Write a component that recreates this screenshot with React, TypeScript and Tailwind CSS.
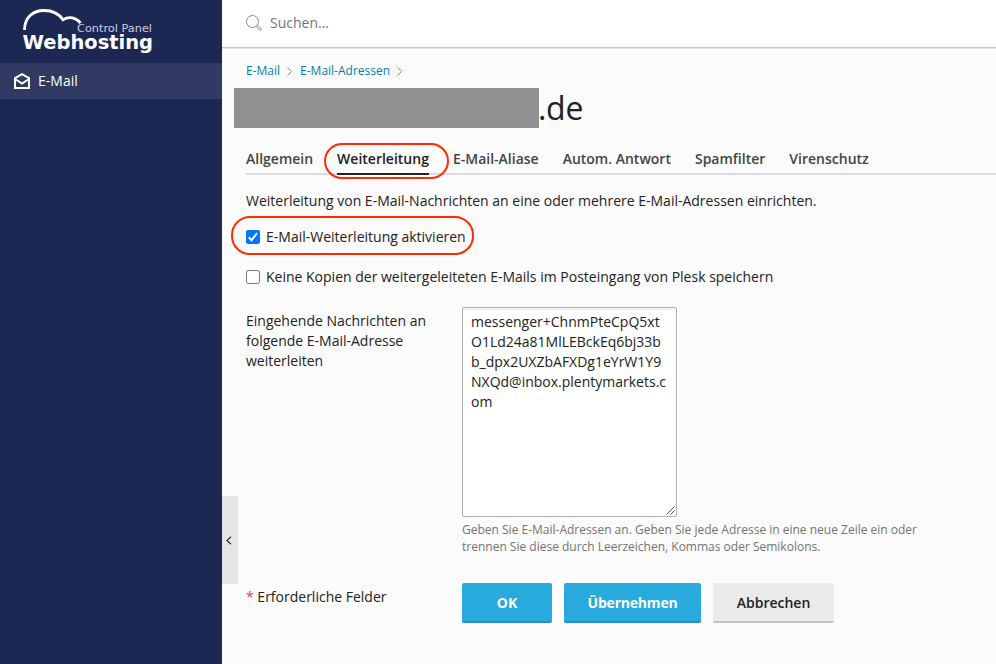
import React from 'react';

const tabs = ['Allgemein', 'Weiterleitung', 'E-Mail-Aliase', 'Autom. Antwort', 'Spamfilter', 'Virenschutz'];

function Logo() {
  return (
    <svg className="block h-[63px] w-[222px]" viewBox="0 0 222 63" fill="none">
      <path
        d="M24.500 30 C24.500 17.500 33 10.500 44 10.500 C53 10.500 59.500 14.500 63 19.800 C69 16 76 17.500 80.500 23"
        stroke="#fff"
        strokeWidth="2.800"
      />
      <text x="77" y="32" fill="#c9cde0" fontSize="10.500" textLength="75" lengthAdjust="spacingAndGlyphs" className="font-['DejaVu_Sans',sans-serif]">
        Control Panel
      </text>
      <text
        x="22.500"
        y="48.500"
        fill="#fff"
        fontSize="20"
        fontWeight="700"
        textLength="130.500"
        lengthAdjust="spacingAndGlyphs"
        className="font-['DejaVu_Sans',sans-serif]"
      >
        Webhosting
      </text>
    </svg>
  );
}

function Sidebar() {
  return (
    <aside className="h-full w-[222px] shrink-0 bg-[#1d2754]">
      <Logo />
      <div className="flex h-9 items-center bg-[#313a62] pl-[14px] text-white">
        <svg className="h-4 w-4" viewBox="0 0 16 16" fill="none" stroke="#fff" strokeWidth="2">
          <path d="M1 15V5.200L8 1.200l7 4v9.800z" />
          <path d="M1 6 8 10.500 15 6" />
        </svg>
        <span className="ml-2">E-Mail</span>
      </div>
    </aside>
  );
}

function Chevron() {
  return (
    <svg className="h-[9px] w-[5px]" viewBox="0 0 5 9" fill="none" stroke="#8b8b8b">
      <path d="m.5.5 4 4-4 4" />
    </svg>
  );
}

function Checkbox({ checked = false }: { checked?: boolean }) {
  return (
    <svg className="mr-[6px] h-[14px] w-[14px] shrink-0" viewBox="0 0 14 14" fill="none">
      {checked ? (
        <>
          <rect width="14" height="14" rx="2" fill="#0075ff" />
          <path d="m2.800 7.300 2.700 2.900 5.700-7.200" stroke="#fff" strokeWidth="2" />
        </>
      ) : (
        <rect x=".5" y=".5" width="13" height="13" rx="2" fill="#fff" stroke="#767676" />
      )}
    </svg>
  );
}

export default function App() {
  return (
    <div className="relative flex h-[664px] w-[996px] overflow-hidden bg-[#fbfbfb] font-['Open_Sans',sans-serif] text-[14px] leading-5 text-[#222]">
      <Sidebar />
      <div className="flex min-w-0 flex-1 flex-col">
        <header className="mb-px flex h-12 shrink-0 items-center border-b border-[#c6c6c6] bg-white pb-px pl-6 text-[#737373] shadow-[0_1px_0_#e4e4e4]">
          <svg className="h-4 w-4" viewBox="0 0 16 16" fill="none" stroke="#8a8a8a">
            <circle cx="6.500" cy="6.500" r="6" />
            <path d="m10.200 11.500 1.300-1.300 4 3.800-1.400 1.500z" />
          </svg>
          <span className="ml-2">Suchen...</span>
        </header>
        <nav className="mt-3 flex h-5 items-center pl-6 text-[12px] text-[#007fae]">
          <span className="mr-[7px]">E-Mail</span>
          <Chevron />
          <span className="mr-[7px] ml-2">E-Mail-Adressen</span>
          <Chevron />
        </nav>
        <h1 className="mt-[7px] flex h-10 items-center pl-3 text-[32px] leading-10">
          <span className="h-10 w-[305px] bg-[#919191]" />
          <span className="-ml-px pb-px tracking-[-0.3px]">.de</span>
        </h1>
        <div className="mt-[18px] ml-6 flex h-[29px] shrink-0 gap-6 border-b-2 border-[#dcdcdc] font-semibold text-[#444]">
          {tabs.map((tab, i) => (
            <div key={tab} className={i === 1 ? 'h-[29px] border-b-2 border-[#222] pt-[3px] text-[#222]' : 'pt-[3px]'}>
              {tab}
            </div>
          ))}
        </div>
        <main className="pl-6">
          <p className="mt-4">Weiterleitung von E-Mail-Nachrichten an eine oder mehrere E-Mail-Adressen einrichten.</p>
          <label className="mt-4 flex h-5 items-center"><Checkbox checked />E-Mail-Weiterleitung aktivieren</label>
          <label className="mt-5 flex h-5 items-center"><Checkbox />Keine Kopien der weitergeleiteten E-Mails im Posteingang von Plesk speichern</label>
          <div className="mt-5 flex">
            <div className="w-[216px] shrink-0 pt-1 pr-4">Eingehende Nachrichten an folgende E-Mail-Adresse weiterleiten</div>
            <div>
              <div className="flex h-[210px] w-[215px] flex-col rounded-[2px] border border-[#b0b0b0] bg-white px-2 pt-1 shadow-[inset_0_2px_1px_#f0f0f0]">
                <span>messenger+ChnmPteCpQ5xt</span>
                <span>O1Ld24a81MlLEBckEq6bj33b</span>
                <span>b_dpx2UXZbAFXDg1eYrW1Y9</span>
                <span>NXQd@inbox.plentymarkets.c</span>
                <span>om</span>
                <svg className="mt-auto -mr-[7px] mb-px h-[9px] w-[9px] self-end" viewBox="0 0 9 9" stroke="#555">
                  <path d="m.5 8.500 8-8M4.500 8.500l4-4" />
                </svg>
              </div>
              <p className="mt-1 w-[470px] text-[12px] leading-[17px] text-[#737373]">
                Geben Sie E-Mail-Adressen an. Geben Sie jede Adresse in eine neue Zeile ein oder<br />
                trennen Sie diese durch Leerzeichen, Kommas oder Semikolons.
              </p>
            </div>
          </div>
          <div className="mt-7 flex">
            <div className="w-[216px] shrink-0 pt-1"><span className="text-[#d0455a]">*</span> Erforderliche Felder</div>
            <div className="flex gap-3 font-semibold">
              <button className="h-10 w-[90px] rounded-[2px] border-b-2 border-[#2391bd] bg-[#28aade] pt-0.5 font-bold text-white">OK</button>
              <button className="h-10 w-[137px] rounded-[2px] border-b-2 border-[#2391bd] bg-[#28aade] pt-0.5 font-bold tracking-[-0.2px] text-white">Übernehmen</button>
              <button className="h-10 w-[121px] rounded-[2px] border-b-2 border-[#c3c3c3] bg-[#ebebeb] pt-0.5">Abbrechen</button>
            </div>
          </div>
        </main>
      </div>
      <div className="absolute top-[496px] left-[222px] flex h-[88px] w-4 items-center rounded-r-[3px] bg-[#e6e6e6] pl-1">
        <svg className="h-[9px] w-[6px]" viewBox="0 0 6 9" fill="none" stroke="#333" strokeWidth="1.2">
          <path d="m5 .7-4 3.800 4 3.800" />
        </svg>
      </div>
      <div className="absolute top-[143px] left-[324px] h-9 w-[125px] rounded-[18px] border-2 border-[#ff2a00]" />
      <div className="absolute top-[216px] left-[231px] h-[39px] w-[243px] rounded-[19px] border-2 border-[#ff2a00]" />
    </div>
  );
}
